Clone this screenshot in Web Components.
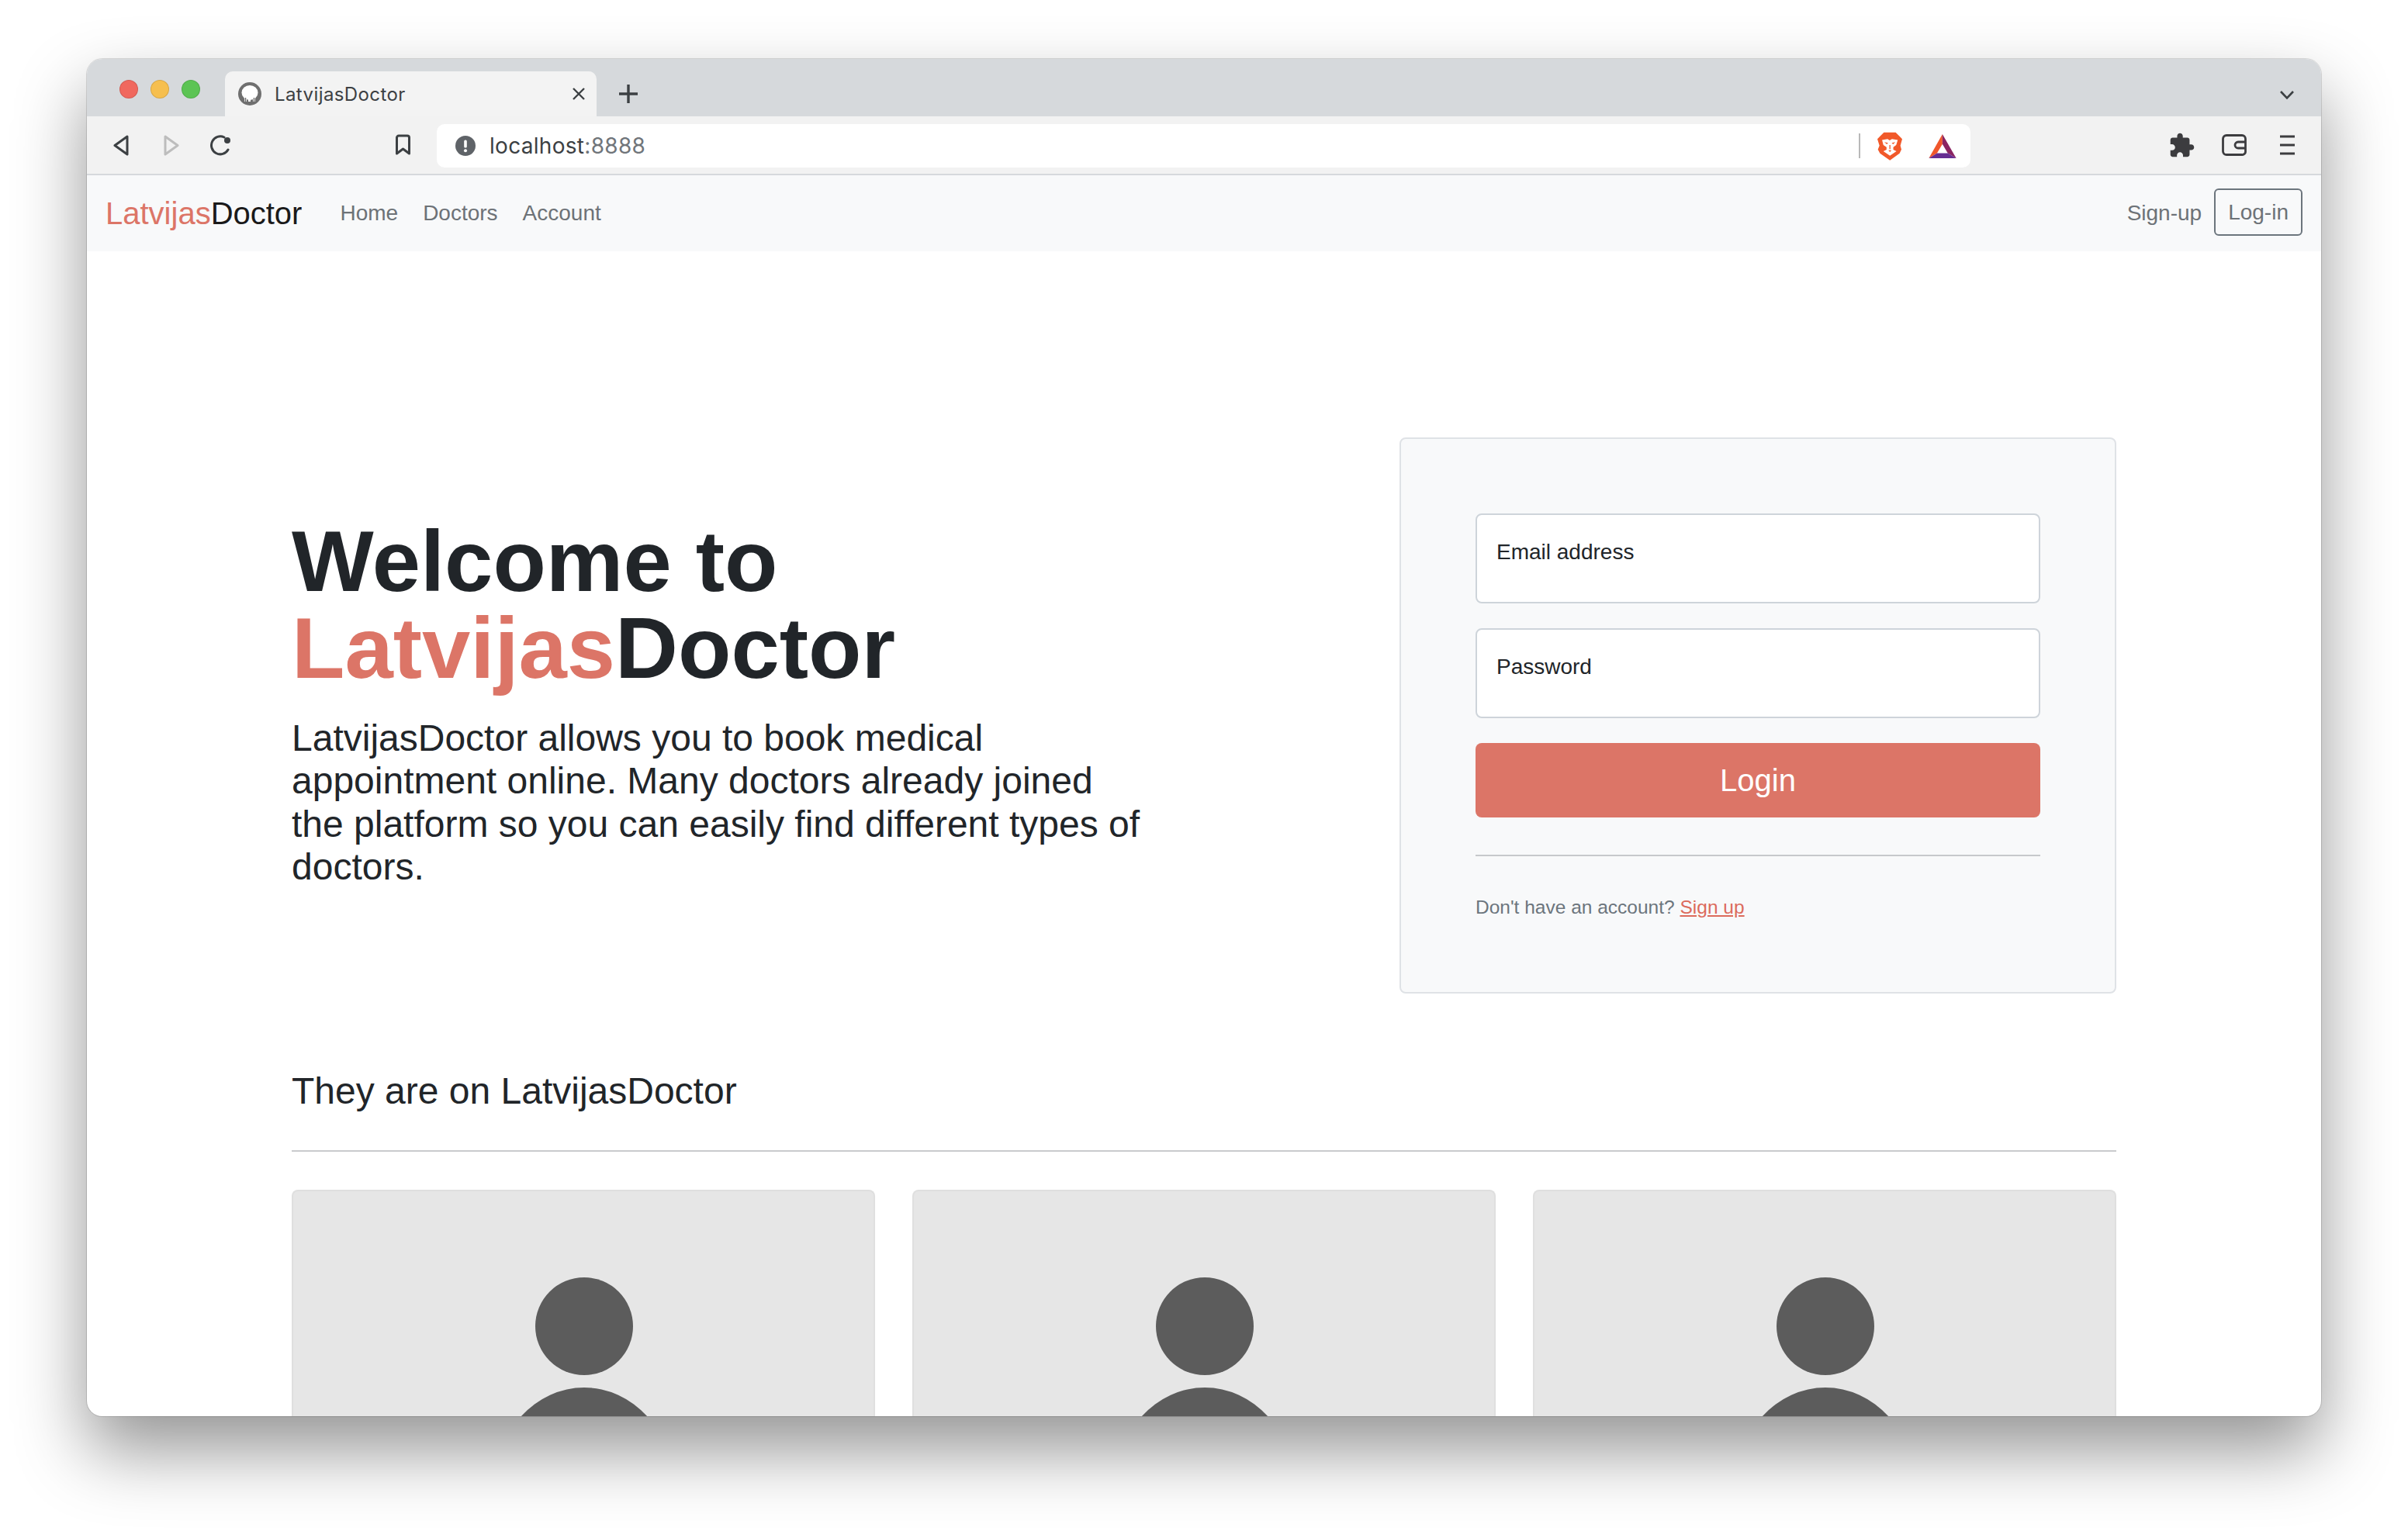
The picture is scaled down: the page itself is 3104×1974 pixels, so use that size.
<!DOCTYPE html>
<html lang="en">
<head>
<meta charset="utf-8">
<title>LatvijasDoctor</title>
<style>
  html, body { margin: 0; background: #fff; }
  body {
    width: 3104px;
    height: 1974px;
    overflow: hidden;
    padding: 76px 0 0 112px;
    box-sizing: border-box;
    font-family: "Liberation Sans", Arial, sans-serif;
    color: #212529;
  }
</style>
</head>
<body>
<browser-window>
  <browser-tabs>LatvijasDoctor</browser-tabs>
  <browser-toolbar></browser-toolbar>
  <site-nav></site-nav>
  <landing-page>
    <hero-row>
      <hero-intro></hero-intro>
      <login-card></login-card>
    </hero-row>
    <doctor-section>
      They are on LatvijasDoctor
      <doctor-card slot="cards"></doctor-card>
      <doctor-card slot="cards"></doctor-card>
      <doctor-card slot="cards"></doctor-card>
    </doctor-section>
  </landing-page>
</browser-window>

<script>
class BrowserWindow extends HTMLElement {
  constructor() {
    super();
    this.attachShadow({ mode: 'open' });
  }
  connectedCallback() {
    this.shadowRoot.innerHTML = `
      <style>
        :host {
          display: block;
          width: 2880px;
          height: 1750px;
          border-radius: 20px;
          background: #fff;
          box-shadow: 0 0 0 1px rgba(0, 0, 0, 0.13), 0 44px 90px rgba(0, 0, 0, 0.42);
        }
        .clip {
          width: 100%;
          height: 100%;
          border-radius: 20px;
          overflow: hidden;
        }
      </style>
      <div class="clip"><slot></slot></div>
    `;
  }
}

class BrowserTabs extends HTMLElement {
  constructor() {
    super();
    this.attachShadow({ mode: 'open' });
  }
  connectedCallback() {
    this.shadowRoot.innerHTML = `
      <style>
        :host {
          display: flex;
          align-items: flex-end;
          height: 74px;
          background: #d6d9dc;
          padding-left: 42px;
          padding-right: 35px;
          font-family: Inter, "Liberation Sans", sans-serif;
        }
        .lights {
          display: flex;
          gap: 16px;
          align-self: flex-start;
          margin-top: 27px;
          width: 136px;
        }
        .lights i {
          display: block;
          width: 22px;
          height: 22px;
          border-radius: 50%;
          border: 1px solid rgba(0, 0, 0, 0.12);
        }
        .tab {
          display: flex;
          align-items: center;
          width: 479px;
          height: 58px;
          box-sizing: border-box;
          padding: 0 14px 0 17px;
          background: #f3f3f3;
          border-radius: 10px 10px 0 0;
          font-size: 24px;
          letter-spacing: 0.4px;
          color: #3c4043;
        }
        .title { flex: 1; margin-left: 17px; }
        .plus { margin: 0 auto 17px 29px; display: block; }
        .chevron { display: block; align-self: flex-start; margin-top: 41px; }
      </style>
      <div class="lights">
        <i style="background:#f0685e"></i>
        <i style="background:#f6bf4f"></i>
        <i style="background:#5cc454"></i>
      </div>
      <div class="tab">
        <svg width="30" height="30" viewBox="0 0 30 30">
          <circle cx="15" cy="15" r="15" fill="#6f6f6f"/>
          <ellipse cx="15" cy="13.500" rx="10.500" ry="9.500" fill="#fff"/>
          <path d="M8 25V18H22V25H19V20H16V25H13V20H11V25Z" fill="#fff"/>
          <path d="M9.500 26V20M20.500 26V20" stroke="#6f6f6f" stroke-width="1.500"/>
        </svg>
        <span class="title"><slot></slot></span>
        <svg width="18" height="18" viewBox="0 0 18 18">
          <path d="M2 2 16 16M16 2 2 16" stroke="#3c4043" stroke-width="2.4" fill="none"/>
        </svg>
      </div>
      <svg class="plus" width="24" height="24" viewBox="0 0 24 24">
        <path d="M12 0V24M0 12H24" stroke="#3c4043" stroke-width="3.4"/>
      </svg>
      <svg class="chevron" width="18" height="11" viewBox="0 0 18 11">
        <path d="M1 1 9 9.4 17 1" stroke="#3c4043" stroke-width="2.6" fill="none"/>
      </svg>
    `;
  }
}

class BrowserToolbar extends HTMLElement {
  constructor() {
    super();
    this.attachShadow({ mode: 'open' });
  }
  connectedCallback() {
    this.shadowRoot.innerHTML = `
      <style>
        :host {
          display: flex;
          align-items: center;
          height: 74px;
          background: #f2f2f2;
          border-bottom: 2px solid #d6d9dc;
          font-family: Inter, "Liberation Sans", sans-serif;
        }
        svg { display: block; flex: none; }
        .address {
          display: flex;
          align-items: center;
          width: 1977px;
          height: 56px;
          margin-left: 33px;
          margin-top: 2px;
          background: #fff;
          border-radius: 10px;
          box-sizing: border-box;
          padding: 0 18px 0 24px;
          font-size: 28px;
          letter-spacing: 0.3px;
          color: #3c4043;
        }
        .host { margin-left: 18px; flex: 1; }
        .port { color: #70757a; }
        .sep { width: 2px; height: 32px; background: #b8b8b8; }
      </style>
      <svg style="margin-left:34px" width="20" height="27" viewBox="0 0 20 27">
        <path d="M18 2 2 13.5 18 25Z" fill="none" stroke="#3c4043" stroke-width="3" stroke-linejoin="round"/>
      </svg>
      <svg style="margin-left:45px" width="20" height="27" viewBox="0 0 20 27">
        <path d="M2 2 18 13.5 2 25Z" fill="none" stroke="#bdbdbd" stroke-width="3" stroke-linejoin="round"/>
      </svg>
      <svg style="margin-left:39px" width="30" height="28" viewBox="0 0 30 28">
        <path d="M19 4A11.5 11.5 0 1 0 24 20" fill="none" stroke="#3c4043" stroke-width="3" stroke-linecap="round"/>
        <circle cx="23" cy="8" r="4" fill="#3c4043"/>
      </svg>
      <svg style="margin-left:209px" width="21" height="28" viewBox="0 0 21 28">
        <path d="M2.5 4.5a2.5 2.5 0 0 1 2.5-2.5h11a2.5 2.5 0 0 1 2.5 2.5V25l-8-6-8 6Z" fill="none" stroke="#3c4043" stroke-width="3" stroke-linejoin="round"/>
      </svg>
      <div class="address">
        <svg width="26" height="26" viewBox="0 0 26 26">
          <circle cx="13" cy="13" r="13" fill="#5f6368"/>
          <rect x="11.2" y="5.5" width="3.6" height="10" rx="1.6" fill="#fff"/>
          <circle cx="13" cy="19.3" r="2" fill="#fff"/>
        </svg>
        <div class="host">localhost<span class="port">:8888</span></div>
        <div class="sep"></div>
        <svg style="margin-left:22px" width="32" height="37" viewBox="0 0 95 109">
          <path d="M25 2H70L85 17 95 27 88 52 92 67 85 82 48 109 10 82 2 67 8 52 0 27 10 17Z" fill="#f1592a"/>
          <path d="M18 31 39 27 47 32 56 27 78 31 72 50 61 58 61 68 73 74 48 91 23 74 35 68 35 58 23 50Z" fill="#fff"/>
          <path d="M27 39 41 42 36 47ZM69 39 55 42 60 47ZM42 70H54L48 77Z" fill="#f1592a"/>
          <path d="M48 50V66" stroke="#f1592a" stroke-width="4"/>
        </svg>
        <svg style="margin-left:34px" width="36" height="31" viewBox="0 0 107 94">
          <path d="M53 0 0 94 32 74 53 39Z" fill="#f0562b"/>
          <path d="M53 0 107 94 74 74 53 39Z" fill="#8a2462"/>
          <path d="M0 94H107L74 74H32Z" fill="#662d91"/>
        </svg>
      </div>
      <svg style="margin-left:257px" width="32" height="32" viewBox="1.5 0.5 22 22">
        <path fill="#3c3c3f" d="M20.5 11H19V7c0-1.1-.9-2-2-2h-4V3.5C13 2.12 11.88 1 10.5 1S8 2.12 8 3.5V5H4c-1.1 0-1.99.9-1.99 2v3.8H3.5c1.49 0 2.7 1.21 2.7 2.7s-1.21 2.7-2.7 2.7H2V20c0 1.1.9 2 2 2h3.8v-1.5c0-1.49 1.21-2.7 2.7-2.7 1.49 0 2.7 1.21 2.7 2.7V22H17c1.1 0 2-.9 2-2v-4h1.5c1.38 0 2.5-1.12 2.5-2.5S21.88 11 20.5 11z"/>
      </svg>
      <svg style="margin-left:35px" width="32" height="28" viewBox="0 0 32 28">
        <path d="M26 1.5H6A4.5 4.5 0 0 0 1.500 6V22A4.500 4.500 0 0 0 6 26.500H26A4 4 0 0 0 30.500 22V6A4.500 4.500 0 0 0 26 1.500ZM30 10H21A4 4 0 0 0 21 18H30" fill="none" stroke="#3c3c3f" stroke-width="2.800"/>
      </svg>
      <svg style="margin-left:43px" width="19" height="26" viewBox="0 0 19 26">
        <path d="M0 2H19M0 13H19M0 24H19" stroke="#3c3c3f" stroke-width="2.800"/>
      </svg>
    `;
  }
}

class SiteNav extends HTMLElement {
  constructor() {
    super();
    this.attachShadow({ mode: 'open' });
  }
  connectedCallback() {
    this.shadowRoot.innerHTML = `
      <style>
        :host {
          display: flex;
          align-items: center;
          height: 98px;
          padding: 0 24px 0 24px;
          background: #f8f9fa;
          font-size: 28px;
          color: #6d7277;
        }
        .brand { font-size: 40px; color: #1a1a1a; margin-right: 49px; }
        .brand span { color: #dc7567; }
        .links { display: flex; gap: 32px; flex: 1; }
        .signup { margin-right: -1px; }
        .login {
          margin-left: 17px;
          margin-bottom: 3px;
          height: 61px;
          box-sizing: border-box;
          padding: 0 16px;
          display: flex;
          align-items: center;
          border: 2px solid #6c757d;
          border-radius: 6px;
        }
      </style>
      <div class="brand"><span>Latvijas</span>Doctor</div>
      <div class="links"><div>Home</div><div>Doctors</div><div>Account</div></div>
      <div class="signup">Sign-up</div>
      <div class="login">Log-in</div>
    `;
  }
}

class LandingPage extends HTMLElement {
  constructor() {
    super();
    this.attachShadow({ mode: 'open' });
  }
  connectedCallback() {
    this.shadowRoot.innerHTML = `
      <style>
        :host {
          display: block;
          padding: 240px 264px 0;
        }
      </style>
      <slot></slot>
    `;
  }
}

class HeroRow extends HTMLElement {
  constructor() {
    super();
    this.attachShadow({ mode: 'open' });
  }
  connectedCallback() {
    this.shadowRoot.innerHTML = `
      <style>
        :host {
          display: flex;
          align-items: center;
          justify-content: space-between;
        }
      </style>
      <slot></slot>
    `;
  }
}

class HeroIntro extends HTMLElement {
  constructor() {
    super();
    this.attachShadow({ mode: 'open' });
  }
  connectedCallback() {
    this.shadowRoot.innerHTML = `
      <style>
        :host { display: block; width: 1110px; }
        h1 {
          margin: 0 0 32px;
          font-size: 112px;
          line-height: 112px;
          font-weight: 700;
          color: #212529;
        }
        h1 span { color: #dc7567; }
        p {
          margin: 0 0 32px;
          font-size: 48px;
          line-height: 55.2px;
          color: #212529;
        }
      </style>
      <h1>Welcome to<br><span>Latvijas</span>Doctor</h1>
      <p>LatvijasDoctor allows you to book medical appointment online. Many doctors already joined the platform so you can easily find different types of doctors.</p>
    `;
  }
}

class LoginCard extends HTMLElement {
  constructor() {
    super();
    this.attachShadow({ mode: 'open' });
  }
  connectedCallback() {
    this.shadowRoot.innerHTML = `
      <style>
        :host {
          display: block;
          width: 924px;
          box-sizing: border-box;
          padding: 96px 96px 91px;
          background: #f8f9fa;
          border: 2px solid #dfe2e6;
          border-radius: 8px;
        }
        .field {
          height: 116px;
          box-sizing: border-box;
          padding: 32px 25px 0;
          margin-bottom: 32px;
          background: #fff;
          border: 2px solid #ced4da;
          border-radius: 8px;
          font-size: 28px;
          line-height: 32px;
          color: #212529;
        }
        .submit {
          height: 96px;
          display: flex;
          align-items: center;
          justify-content: center;
          background: #dc7567;
          border-radius: 8px;
          color: #fff;
          font-size: 40px;
        }
        hr {
          border: 0;
          height: 2px;
          background: #c6c8cb;
          margin: 48px 0 47px;
        }
        p {
          margin: 0;
          font-size: 24.5px;
          line-height: 37px;
          color: #6c757d;
        }
        a { color: #dc6b5c; text-decoration: underline; }
      </style>
      <div class="field">Email address</div>
      <div class="field">Password</div>
      <div class="submit">Login</div>
      <hr>
      <p>Don't have an account? <a>Sign up</a></p>
    `;
  }
}

class DoctorSection extends HTMLElement {
  constructor() {
    super();
    this.attachShadow({ mode: 'open' });
  }
  connectedCallback() {
    this.shadowRoot.innerHTML = `
      <style>
        :host { display: block; margin-top: 98px; }
        h2 {
          margin: 0 0 49px;
          font-size: 48px;
          line-height: 55px;
          font-weight: 400;
          color: #212529;
        }
        .rule { height: 2px; background: #c9cbcd; margin-bottom: 49px; }
        .grid {
          display: grid;
          grid-template-columns: repeat(3, 1fr);
          gap: 48px;
        }
      </style>
      <h2><slot></slot></h2>
      <div class="rule"></div>
      <div class="grid"><slot name="cards"></slot></div>
    `;
  }
}

class DoctorCard extends HTMLElement {
  constructor() {
    super();
    this.attachShadow({ mode: 'open' });
  }
  connectedCallback() {
    this.shadowRoot.innerHTML = `
      <style>
        :host {
          display: block;
          background: #e6e6e6;
          border: 2px solid #dfdfdf;
          border-bottom: 0;
          border-radius: 8px 8px 0 0;
        }
        svg { display: block; width: 100%; height: 500px; }
      </style>
      <svg viewBox="0 0 748 500">
        <circle cx="375" cy="174" r="63" fill="#5c5c5c"/>
        <ellipse cx="375" cy="380" rx="115" ry="127" fill="#5c5c5c"/>
      </svg>
    `;
  }
}

customElements.define('browser-window', BrowserWindow);
customElements.define('browser-tabs', BrowserTabs);
customElements.define('browser-toolbar', BrowserToolbar);
customElements.define('site-nav', SiteNav);
customElements.define('landing-page', LandingPage);
customElements.define('hero-row', HeroRow);
customElements.define('hero-intro', HeroIntro);
customElements.define('login-card', LoginCard);
customElements.define('doctor-section', DoctorSection);
customElements.define('doctor-card', DoctorCard);
</script>
</body>
</html>
